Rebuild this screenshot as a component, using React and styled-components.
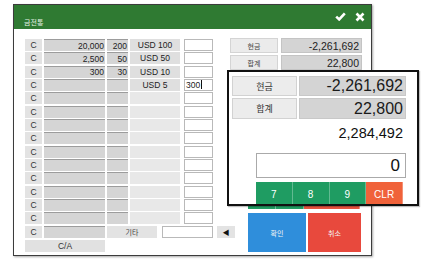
import React from "react";
import styled, { createGlobalStyle } from "styled-components";

const FONT = `"Liberation Sans", "Noto Sans CJK KR", sans-serif`;

const Global = createGlobalStyle`
	html, body {
		margin: 0;
		padding: 0;
		background: #ffffff;
		font-family: ${FONT};
	}
	* { box-sizing: border-box; }
`;

const rows = [
	{ amount: "20,000", count: "200", label: "USD 100", input: "" },
	{ amount: "2,500", count: "50", label: "USD 50", input: "" },
	{ amount: "300", count: "30", label: "USD 10", input: "" },
	{ amount: "", count: "", label: "USD 5", input: "300", active: true },
	...Array.from({ length: 10 }, () => ({ amount: "", count: "", label: "", input: "" })),
];

// keypad under the callout is covered; only its tones matter
const hiddenKeys = ["g", "g", "g", "r", "g", "g", "g", "r", "g", "g", "g", "r", "g", "g", "rw"];
const calloutKeys = ["7", "8", "9", "CLR"];

export default function App() {
	return (
		<>
			<Global />
			<Page>
				<Window>
					<TitleBar>
						<Title>금전통</Title>
						<TitleIcons>
							<svg width="11" height="9" viewBox="0 0 11 9">
								<path d="M1.2 4.6 L4.2 7.4 L9.8 1.4" fill="none" stroke="#fff" strokeWidth="2.6" />
							</svg>
							<svg width="10" height="10" viewBox="0 0 10 10">
								<path d="M1.5 1.5 L8.5 8.5 M8.5 1.5 L1.5 8.5" fill="none" stroke="#fff" strokeWidth="2.6" />
							</svg>
						</TitleIcons>
					</TitleBar>

					<Body>
						<LeftPane>
							<Rows>
								{rows.map((r, i) => (
									<Row key={i}>
										<CCell>C</CCell>
										<AmountCell>{r.amount}</AmountCell>
										<CountCell>{r.count}</CountCell>
										<LabelCell filled={r.label !== ""}>{r.label}</LabelCell>
										<InputCell>
											{r.input}
											{r.active && <Caret />}
										</InputCell>
									</Row>
								))}
								<Row>
									<CCell>C</CCell>
									<AmountCell />
									<EtcCell>기타</EtcCell>
									<EtcInput />
									<ArrowButton>◀</ArrowButton>
								</Row>
							</Rows>
							<ClearAllButton>C/A</ClearAllButton>
						</LeftPane>

						<RightPane>
							<SumRow>
								<SumLabel>현금</SumLabel>
								<SumValue>-2,261,692</SumValue>
							</SumRow>
							<SumRow>
								<SumLabel>합계</SumLabel>
								<SumValue>22,800</SumValue>
							</SumRow>
							<PayAmount />
							<PayInput />
							<Keypad>
								{hiddenKeys.map((k, i) => (
									<Key key={i} tone={k[0] === "r" ? "red" : "green"} wide={k === "rw"} />
								))}
							</Keypad>
							<ActionRow>
								<ActionButton tone="blue" w={58}>확인</ActionButton>
								<ActionButton tone="red" w={53}>취소</ActionButton>
							</ActionRow>
						</RightPane>
					</Body>
				</Window>

				<Callout>
					<CalloutRow h={20}>
						<CalloutLabel>현금</CalloutLabel>
						<CalloutValue>-2,261,692</CalloutValue>
					</CalloutRow>
					<CalloutRow h={21}>
						<CalloutLabel>합계</CalloutLabel>
						<CalloutValue>22,800</CalloutValue>
					</CalloutRow>
					<CalloutAmount>2,284,492</CalloutAmount>
					<CalloutInput>0</CalloutInput>
					<CalloutKeys>
						{calloutKeys.map((k) => (
							<CalloutKey key={k} tone={k === "CLR" ? "orange" : "green"}>{k}</CalloutKey>
						))}
					</CalloutKeys>
				</Callout>
			</Page>
		</>
	);
}

const Page = styled.div`
	position: relative;
	width: 440px;
	height: 264px;
	padding: 4px 0 0 13px;
	overflow: hidden;
`;

const Window = styled.div`
	width: 359px;
	height: 252px;
	border: 1px solid #3c3c3c;
	box-shadow: 1px 1px 2px rgba(0, 0, 0, 0.35);
	background: #fff;
	display: flex;
	flex-direction: column;
`;

const TitleBar = styled.div`
	height: 24px;
	background: #2f7a32;
	display: flex;
	align-items: center;
	justify-content: space-between;
	padding: 2px 6px 0 10px;
`;

const Title = styled.div`
	color: #e8f2e8;
	font-size: 7px;
	padding-top: 8px;
`;

const TitleIcons = styled.div`
	display: flex;
	align-items: center;
	gap: 9px;
	margin-bottom: 3px;
`;

const Body = styled.div`
	display: flex;
	padding: 9px 9px 0 11px;
`;

const LeftPane = styled.div`
	width: 205px;
	flex-shrink: 0;
	padding-top: 1px;
	display: flex;
	flex-direction: column;
`;

const Rows = styled.div`
	display: flex;
	flex-direction: column;
	gap: 1.34px;
`;

const Row = styled.div`
	display: flex;
	height: 12px;
	font-size: 8.5px;
	color: #222;
`;

const Cell = styled.div`
	height: 100%;
	display: flex;
	align-items: center;
	flex-shrink: 0;
`;

const CCell = styled(Cell)`
	width: 17px;
	background: #e3e3e3;
	justify-content: center;
	color: #333;
`;

const AmountCell = styled(Cell)`
	width: 61px;
	margin-left: 2px;
	background: #d5d5d5;
	border-top: 1px solid #9c9c9c;
	justify-content: flex-end;
	padding-right: 1px;
`;

const CountCell = styled(Cell)`
	width: 21px;
	margin-left: 2px;
	background: #d5d5d5;
	border-top: 1px solid #9c9c9c;
	justify-content: flex-end;
	padding-right: 1px;
`;

const LabelCell = styled(Cell)`
	width: 50px;
	margin-left: 2px;
	background: ${(p) => (p.filled ? "#dfdfdf" : "#e8e8e8")};
	justify-content: center;
`;

const InputCell = styled(Cell)`
	width: 29px;
	margin-left: 4px;
	background: #fff;
	border: 1px solid #b9b9b9;
	padding-left: 1px;
`;

const Caret = styled.span`
	display: inline-block;
	width: 1px;
	height: 9px;
	background: #111;
	margin-left: 0.5px;
`;

const EtcCell = styled(Cell)`
	width: 50px;
	margin-left: 2px;
	background: #e3e3e3;
	justify-content: center;
	font-size: 7px;
	color: #444;
`;

const EtcInput = styled(Cell)`
	width: 51px;
	margin-left: 5px;
	background: #fff;
	border: 1px solid #b9b9b9;
`;

const ArrowButton = styled(Cell)`
	width: 18px;
	margin-left: 4px;
	background: #e3e3e3;
	justify-content: center;
	font-size: 7px;
	color: #111;
`;

const ClearAllButton = styled.div`
	width: 80px;
	height: 12px;
	margin-top: 2.5px;
	background: #e1e1e1;
	display: flex;
	align-items: center;
	justify-content: center;
	font-size: 8.5px;
	color: #333;
`;

const RightPane = styled.div`
	width: 132px;
	display: flex;
	flex-direction: column;
`;

const SumRow = styled.div`
	display: flex;
	gap: 3px;
	height: 15px;
	margin-bottom: 2px;
`;

const SumLabel = styled.div`
	width: 48px;
	background: #ebebeb;
	border: 1px solid #d4d4d4;
	display: flex;
	align-items: center;
	justify-content: center;
	font-size: 7px;
	color: #444;
`;

const SumValue = styled.div`
	flex: 1;
	background: #d4d4d4;
	border: 1px solid #c4c4c4;
	display: flex;
	align-items: center;
	justify-content: flex-end;
	padding-right: 2px;
	font-size: 10.5px;
	color: #222;
`;

const PayAmount = styled.div`
	height: 25px;
`;

const PayInput = styled.div`
	margin-left: 18px;
	height: 20px;
	border: 1px solid #b0b0b0;
`;

const Keypad = styled.div`
	margin: 3px 0 0 18px;
	width: 112px;
	display: grid;
	grid-template-columns: repeat(4, 1fr);
	grid-auto-rows: 21.5px;
	row-gap: 1px;
`;

const Key = styled.div`
	grid-column: ${(p) => (p.wide ? "span 2" : "span 1")};
	background: ${(p) => (p.tone === "red" ? "#e8533f" : "#1f9c62")};
	border-right: 1px solid rgba(255, 255, 255, 0.35);
`;

const ActionRow = styled.div`
	display: flex;
	gap: 2px;
	margin: 4px 0 0 18px;
`;

const ActionButton = styled.div`
	width: ${(p) => p.w}px;
	height: 39px;
	background: ${(p) => (p.tone === "blue" ? "#2f8edb" : "#e8493d")};
	color: #f4f4f4;
	font-size: 7px;
	display: flex;
	align-items: center;
	justify-content: center;
`;

/* magnified callout laid over the window */
const Callout = styled.div`
	position: absolute;
	left: 227px;
	top: 70px;
	width: 192px;
	height: 136px;
	border: 2px solid #111;
	background: #fff;
	padding: 4px 11px 0 3px;
	overflow: hidden;
	display: flex;
	flex-direction: column;
	box-shadow: 1px 1px 1px rgba(0, 0, 0, 0.25);
`;

const CalloutRow = styled.div`
	display: flex;
	gap: 2px;
	height: ${(p) => p.h}px;
	margin-bottom: 2px;
	flex-shrink: 0;
`;

const CalloutLabel = styled.div`
	width: 65px;
	background: #ececec;
	border: 1px solid #d2d2d2;
	display: flex;
	align-items: center;
	justify-content: center;
	font-size: 9px;
	color: #333;
`;

const CalloutValue = styled.div`
	flex: 1;
	background: #d4d4d4;
	border: 1px solid #c8c8c8;
	display: flex;
	align-items: center;
	justify-content: flex-end;
	padding-right: 2px;
	font-size: 16px;
	color: #1a1a1a;
`;

const CalloutAmount = styled.div`
	margin-top: 1px;
	height: 22px;
	line-height: 22px;
	text-align: right;
	padding-right: 3px;
	font-size: 14.5px;
	color: #111;
	flex-shrink: 0;
`;

const CalloutInput = styled.div`
	margin: 9px 0 0 24px;
	height: 25px;
	border: 1px solid #aaaaaa;
	text-align: right;
	padding-right: 5px;
	font-size: 17px;
	line-height: 23px;
	color: #111;
	flex-shrink: 0;
`;

const CalloutKeys = styled.div`
	margin: 4px 3px 0 24px;
	display: grid;
	grid-template-columns: repeat(4, 1fr);
	height: 28px;
	flex-shrink: 0;
`;

const CalloutKey = styled.div`
	background: ${(p) => (p.tone === "orange" ? "#f0623a" : "#1f9c62")};
	border-right: 1px solid rgba(255, 255, 255, 0.3);
	color: #fff;
	font-size: 10px;
	display: flex;
	align-items: center;
	justify-content: center;
	padding-bottom: 3px;
`;
